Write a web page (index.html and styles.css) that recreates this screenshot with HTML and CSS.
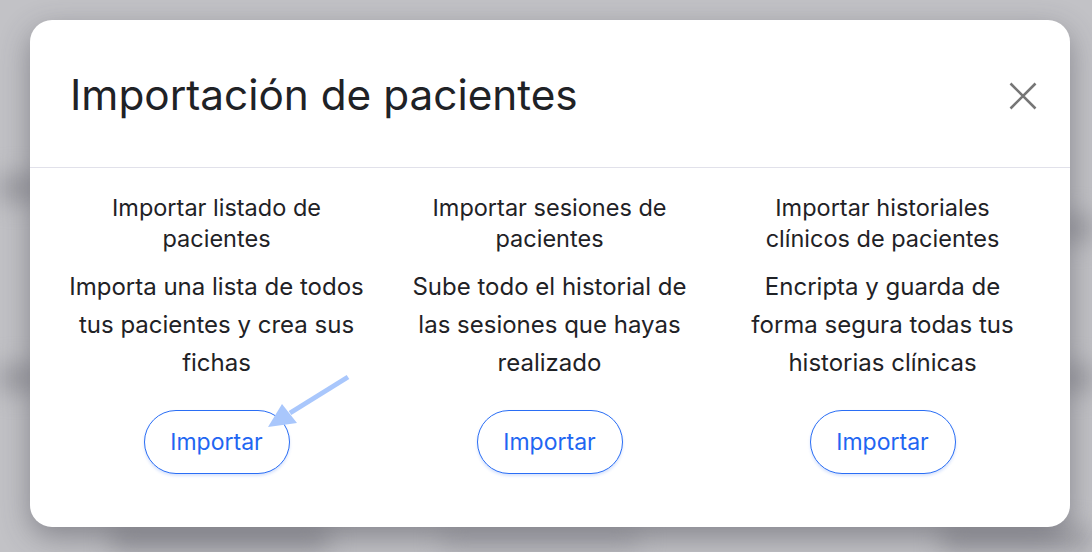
FILE: index.html
```html
<!DOCTYPE html>
<html lang="es">
<head>
<meta charset="utf-8">
<title>Importación de pacientes</title>
<link rel="stylesheet" href="styles.css">
</head>
<body>
<div class="backdrop">
  <div class="blur-layer">
    <div class="blob b1"></div>
    <div class="blob b2"></div>
    <div class="blob b3"></div>
    <div class="blob b4"></div>
    <div class="blob b5"></div>
    <div class="blob b6"></div>
    <div class="blob b7"></div>
  </div>
  <div class="modal">
    <div class="modal-header">
      <h1 class="modal-title">Importación de pacientes</h1>
      <button class="close-btn" aria-label="Cerrar">
        <svg width="30" height="30" viewBox="0 0 30 30"><path d="M2.5 2.5 L27.5 27.5 M27.5 2.5 L2.5 27.5" stroke="#767676" stroke-width="2.6" fill="none"/></svg>
      </button>
    </div>
    <div class="modal-body">
      <div class="option">
        <div class="option-title">Importar listado de pacientes</div>
        <div class="option-desc">Importa una lista de todos tus pacientes y crea sus fichas</div>
        <button class="import-btn">Importar</button>
      </div>
      <div class="option">
        <div class="option-title">Importar sesiones de pacientes</div>
        <div class="option-desc">Sube todo el historial de las sesiones que hayas realizado</div>
        <button class="import-btn">Importar</button>
      </div>
      <div class="option">
        <div class="option-title">Importar historiales clínicos de pacientes</div>
        <div class="option-desc">Encripta y guarda de forma segura todas tus historias clínicas</div>
        <button class="import-btn">Importar</button>
      </div>
    </div>
    <svg class="arrow" width="100" height="70" viewBox="0 0 100 70">
      <path d="M88 7 L30 43" stroke="#a9c7fc" stroke-width="5" fill="none"/>
      <polygon points="8,57 22,34 37,53" fill="#a9c7fc"/>
    </svg>
  </div>
</div>
</body>
</html>
```

FILE: styles.css
```css
* { box-sizing: border-box; }
html, body { margin: 0; padding: 0; }
body {
  width: 1092px;
  height: 552px;
  overflow: hidden;
  background: #c2c2c6;
  font-family: "Inter", "Liberation Sans", sans-serif;
  color: #1f2226;
}
.backdrop {
  position: relative;
  width: 1092px;
  height: 552px;
  padding: 20px 22px 25px 30px;
}
.blur-layer {
  position: absolute;
  inset: 0;
  filter: blur(12px);
  overflow: hidden;
}
.blob { position: absolute; background: #98989e; border-radius: 8px; }
.b1 { left: -20px; top: 175px; width: 60px; height: 26px; }
.b2 { left: -20px; top: 365px; width: 60px; height: 26px; }
.b3 { left: 1060px; top: 215px; width: 60px; height: 26px; }
.b4 { left: 1060px; top: 365px; width: 60px; height: 26px; }
.b5 { left: 110px; top: 528px; width: 220px; height: 22px; }
.b6 { left: 440px; top: 530px; width: 200px; height: 18px; background: #a8a8ae; }
.b7 { left: 940px; top: 528px; width: 160px; height: 22px; }
.modal {
  position: relative;
  width: 1040px;
  height: 507px;
  background: #ffffff;
  border-radius: 22px;
  box-shadow: 0 10px 30px rgba(60, 60, 70, 0.45);
  display: flex;
  flex-direction: column;
}
.modal-header {
  height: 148px;
  border-bottom: 1px solid #e1e1ea;
  display: flex;
  align-items: center;
  justify-content: space-between;
  padding: 0 32px 0 40px;
}
.modal-title {
  margin: 0;
  font-size: 42.3px;
  font-weight: 400;
  letter-spacing: 0;
  color: #1f2226;
  padding-top: 2px;
}
.close-btn {
  background: none;
  border: none;
  padding: 0;
  width: 30px;
  height: 30px;
  cursor: pointer;
  margin-top: 4px;
}
.close-btn svg { display: block; }
.modal-body {
  display: grid;
  grid-template-columns: repeat(3, 1fr);
  padding: 24px 21px 0 20px;
}
.option {
  display: flex;
  flex-direction: column;
  align-items: center;
  text-align: center;
}
.option-title {
  font-size: 23.5px;
  line-height: 31px;
  max-width: 262px;
}
.option-desc {
  margin-top: 14px;
  font-size: 24px;
  line-height: 38px;
  max-width: 296px;
}
.import-btn {
  margin-top: 28px;
  width: 146px;
  height: 64px;
  border: 1px solid #2a6ef5;
  border-radius: 32px;
  background: #fff;
  color: #1f66f2;
  font-family: "Inter", "Liberation Sans", sans-serif;
  font-size: 23px;
  box-shadow: 0 2px 3px rgba(40, 100, 240, 0.18);
  cursor: pointer;
}
.arrow {
  position: absolute;
  left: 230px;
  top: 350px;
}
```
